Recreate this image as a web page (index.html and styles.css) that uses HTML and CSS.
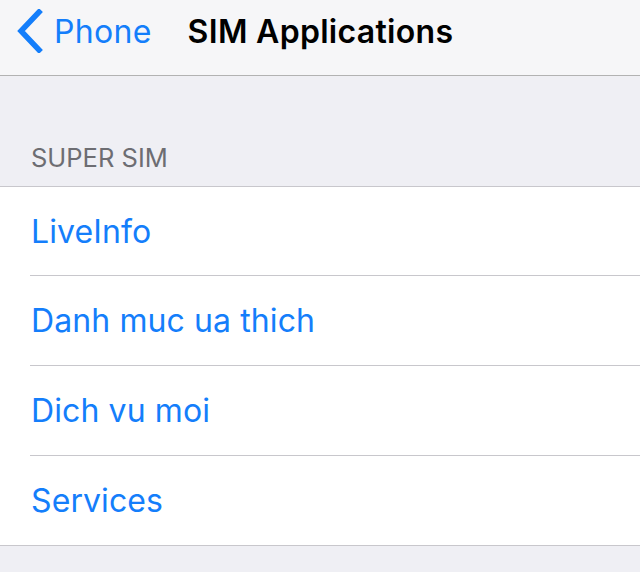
FILE: index.html
```html
<!DOCTYPE html>
<html>
<head>
<meta charset="utf-8">
<link rel="stylesheet" href="styles.css">
</head>
<body>
<header class="nav">
  <a class="back">
    <svg class="chev" width="28" height="44" viewBox="0 0 28 44"><path d="M24 3 L6 22 L24 41" fill="none" stroke="#147efb" stroke-width="5.5" stroke-linecap="square" stroke-linejoin="miter"/></svg>
    <span class="back-label">Phone</span>
  </a>
  <h1 class="title">SIM Applications</h1>
</header>
<main class="content">
  <div class="section-header">SUPER SIM</div>
  <ul class="list">
    <li class="row"><span class="row-label">LiveInfo</span></li>
    <li class="row"><span class="row-label">Danh muc ua thich</span></li>
    <li class="row"><span class="row-label">Dich vu moi</span></li>
    <li class="row"><span class="row-label">Services</span></li>
  </ul>
</main>
</body>
</html>
```
FILE: styles.css
```css
* { box-sizing: border-box; }
html, body { margin: 0; padding: 0; }
body {
  width: 640px;
  height: 572px;
  background: #efeff4;
  font-family: "Inter", "Roboto", "Liberation Sans", sans-serif;
  overflow: hidden;
}
.nav {
  height: 76px;
  background: #f6f6f8;
  border-bottom: 1px solid #b2b2b2;
  display: flex;
  align-items: center;
  padding-left: 15px;
  padding-bottom: 13px;
}
.back {
  display: flex;
  align-items: center;
  color: #147efb;
  font-size: 32px;
  letter-spacing: 0.3px;
}
.chev { display: block; margin-right: 11px; }
.title {
  margin: 0 0 0 36px;
  font-size: 32px;
  font-weight: 600;
  color: #000;
  letter-spacing: 0.3px;
}
.content { padding-top: 69px; }
.section-header {
  padding: 0 0 0 31px;
  height: 41px;
  font-size: 25.5px;
  color: #6d6d72;
  line-height: 26px;
}
.list {
  list-style: none;
  margin: 0;
  padding: 0;
  background: #fff;
  border-top: 1px solid #c8c7cc;
  border-bottom: 1px solid #c8c7cc;
}
.row {
  height: 90px;
  margin-left: 30px;
  display: flex;
  align-items: center;
  border-bottom: 1px solid #c8c7cc;
}
.row:first-child { height: 89px; }
.row:last-child { border-bottom: none; height: 89px; }
.row-label {
  font-size: 32px;
  color: #147efb;
  margin-left: 1px;
  letter-spacing: 0.1px;
}
```
